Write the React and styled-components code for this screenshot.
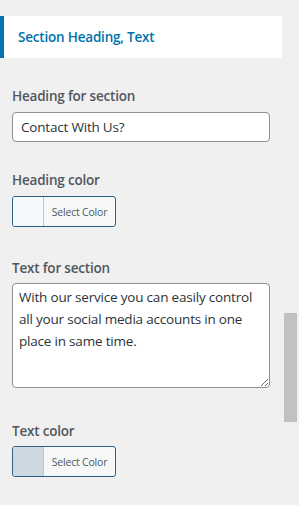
import React from 'react'
import styled, { createGlobalStyle } from 'styled-components'

const GlobalStyle = createGlobalStyle`
  html, body {
    margin: 0;
    padding: 0;
    background: #f0f0f1;
  }
  body {
    font-family: 'Open Sans', 'Noto Sans', sans-serif;
    color: #50575e;
  }
`

const Screen = styled.div`
  display: flex;
  width: 299px;
  height: 505px;
  overflow: hidden;
  background: #f0f0f1;
`

const Panel = styled.div`
  width: 282px;
  padding-top: 16px;
`

const SectionTitle = styled.h3`
  margin: 0;
  height: 42px;
  display: flex;
  align-items: center;
  box-sizing: border-box;
  padding-left: 14px;
  background: #fff;
  border-left: 4px solid #0073aa;
  color: #0073aa;
  font-size: 13.5px;
  font-weight: 600;
  letter-spacing: -0.2px;
`

const Controls = styled.div`
  padding: 28px 12px 0;
  display: flex;
  flex-direction: column;
`

const Field = styled.div`
  display: flex;
  flex-direction: column;
  margin-bottom: ${(p) => p.$gap || 28}px;
`

const Label = styled.label`
  font-size: 13.5px;
  font-weight: 600;
  color: #50575e;
  line-height: 20px;
  margin-bottom: ${(p) => p.$space || 6}px;
  letter-spacing: -0.2px;
`

const TextInput = styled.input`
  box-sizing: border-box;
  width: 258px;
  height: 30px;
  border: 1px solid #8c8f94;
  border-radius: 4px;
  background: #fff;
  padding: 0 8px;
  font-family: inherit;
  font-size: 13.5px;
  color: #2c3338;
  letter-spacing: -0.2px;
  outline: none;
`

const TextArea = styled.textarea`
  box-sizing: border-box;
  width: 258px;
  height: 105px;
  border: 1px solid #8c8f94;
  border-radius: 4px;
  background: #fff;
  padding: 2px 6px;
  font-family: inherit;
  font-size: 13.5px;
  line-height: 22px;
  color: #2c3338;
  letter-spacing: -0.2px;
  outline: none;
  resize: vertical;
`

const ColorButton = styled.button`
  box-sizing: border-box;
  display: flex;
  align-items: stretch;
  width: 104px;
  height: 31px;
  padding: 0;
  border: 1px solid #2c5f88;
  border-radius: 3px;
  background: #f6f7f7;
  overflow: hidden;
  cursor: pointer;
`

const Swatch = styled.span`
  width: 30px;
  background: ${(p) => p.$color};
  border-right: 1px solid #c3c4c7;
`

const ButtonText = styled.span`
  flex: 1;
  display: flex;
  align-items: center;
  justify-content: center;
  font-family: 'Open Sans', 'Noto Sans', sans-serif;
  font-size: 10.5px;
  color: #50575e;
  letter-spacing: -0.2px;
`

const ScrollTrack = styled.div`
  position: relative;
  width: 17px;
`

const ScrollThumb = styled.div`
  position: absolute;
  top: 313px;
  left: 2px;
  width: 13px;
  height: 109px;
  background: #c1c1c1;
`

export default function App() {
  return (
    <Screen>
      <GlobalStyle />
      <Panel>
        <SectionTitle>Section Heading, Text</SectionTitle>
        <Controls>
          <Field $gap={28}>
            <Label>Heading for section</Label>
            <TextInput defaultValue="Contact With Us?" />
          </Field>
          <Field $gap={31}>
            <Label>Heading color</Label>
            <ColorButton>
              <Swatch $color="#f6f9fc" />
              <ButtonText>Select Color</ButtonText>
            </ColorButton>
          </Field>
          <Field $gap={33}>
            <Label $space={5}>Text for section</Label>
            <TextArea defaultValue="With our service you can easily control all your social media accounts in one place in same time." />
          </Field>
          <Field>
            <Label $space={5}>Text color</Label>
            <ColorButton>
              <Swatch $color="#ced8e1" />
              <ButtonText>Select Color</ButtonText>
            </ColorButton>
          </Field>
        </Controls>
      </Panel>
      <ScrollTrack>
        <ScrollThumb />
      </ScrollTrack>
    </Screen>
  )
}
